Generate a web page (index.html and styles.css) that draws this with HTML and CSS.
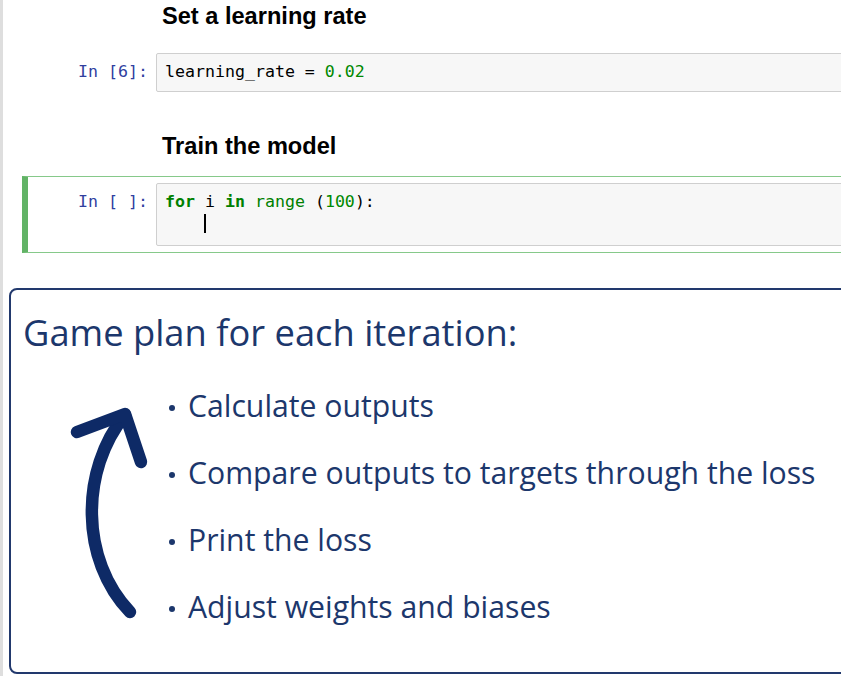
FILE: index.html
```html
<!DOCTYPE html>
<html lang="en">
<head>
<meta charset="utf-8">
<title>Notebook</title>
<link rel="stylesheet" href="styles.css">
</head>
<body>
<div class="page">
  <div class="nb">
    <div class="md md-first"><div class="prompt"></div><h2 class="md-text">Set a learning rate</h2></div>
    <div class="cell cell-first">
      <div class="prompt">In [6]:</div>
      <div class="input"><div class="code"><span class="tok">learning_rate = </span><span class="num">0.02</span></div></div>
    </div>
    <div class="md md-second"><div class="prompt"></div><h2 class="md-text">Train the model</h2></div>
    <div class="cell cell-selected">
      <div class="prompt">In [ ]:</div>
      <div class="input input-tall">
        <div class="code"><span class="kw">for</span><span class="tok"> i </span><span class="kw">in</span><span class="tok"> </span><span class="bi">range</span><span class="tok"> (</span><span class="num">100</span><span class="tok">):</span></div>
        <div class="code"><span class="tok">    </span><span class="cursor"></span></div>
      </div>
    </div>
  </div>
  <div class="slide">
    <svg class="arrow" width="100" height="230" viewBox="60 400 100 230" aria-hidden="true">
      <path d="M130 612 C 80 560 80 470 125 415" fill="none" stroke="#0e2a66" stroke-width="12.5" stroke-linecap="round"/>
      <path d="M77 432 L125 414 L141 462" fill="none" stroke="#0e2a66" stroke-width="12.5" stroke-linecap="round" stroke-linejoin="round"/>
    </svg>
    <div class="slide-title">Game plan for each iteration:</div>
    <ul class="plan">
      <li>Calculate outputs</li>
      <li>Compare outputs to targets through the loss</li>
      <li>Print the loss</li>
      <li>Adjust weights and biases</li>
    </ul>
  </div>
</div>
</body>
</html>
```
FILE: styles.css
```css
html, body {
  margin: 0;
  padding: 0;
  background: #ffffff;
  overflow: hidden;
}
.page {
  border-left: 3px solid #dedede;
  min-height: 676px;
  box-sizing: border-box;
  padding-top: 2px;
}
.nb {
  padding-left: 19px;
}
.prompt {
  width: 120px;
  flex: none;
  margin-right: 8px;
  text-align: right;
  font-family: "DejaVu Sans Mono", "Liberation Mono", monospace;
  font-size: 16.6px;
  line-height: 22px;
  padding-top: 8px;
  color: #303f9f;
  white-space: pre;
}
.md {
  display: flex;
  border-left: 6px solid transparent;
}
.md .prompt {
  padding-top: 0;
}
.md-text {
  margin: 0;
  padding-left: 6px;
  font-family: "Liberation Sans", Arial, sans-serif;
  font-weight: bold;
  font-size: 23.6px;
  line-height: 28px;
  color: #000;
}
.md-second {
  margin-top: 33px;
}
.cell {
  display: flex;
  width: 900px;
  border: 1px solid transparent;
  border-left-width: 6px;
  padding: 6px 0;
}
.cell-first {
  margin-top: 16px;
}
.cell-selected {
  margin-top: 16px;
  border-color: #86c98a;
  border-left-color: #62b366;
}
.input {
  flex: 1;
  background: #f7f7f7;
  border: 1px solid #cfcfcf;
  border-radius: 2px;
  padding: 7px 0 8px 8px;
}
.input-tall {
  min-height: 62px;
  box-sizing: border-box;
  padding-bottom: 10px;
}
.code {
  margin: 0;
  font-family: "DejaVu Sans Mono", "Liberation Mono", monospace;
  font-size: 16.6px;
  line-height: 22px;
  height: 22px;
  color: #000;
  white-space: pre;
}
.tok { color: #000; }
.num { color: #008800; }
.kw { color: #008000; font-weight: bold; }
.bi { color: #008000; }
.cursor {
  display: inline-block;
  width: 0;
  height: 19px;
  border-left: 2px solid #000;
  vertical-align: -4px;
  margin-left: -1px;
}
.slide {
  position: relative;
  margin-top: 35px;
  margin-left: 6px;
  width: 900px;
  height: 386px;
  box-sizing: border-box;
  border: 2px solid #22396d;
  border-radius: 8px;
  color: #1c376c;
  font-family: "Open Sans", "Noto Sans", sans-serif;
}
.arrow {
  position: absolute;
  left: 49px;
  top: 110px;
}
.slide-title {
  padding: 21px 0 0 12px;
  font-size: 36.3px;
  line-height: 42px;
}
.plan {
  list-style: none;
  margin: 19px 0 0 155px;
  padding: 0;
  font-size: 30.2px;
  line-height: 67px;
}
.plan li {
  display: flex;
  align-items: center;
}
.plan li::before {
  content: "";
  width: 6px;
  height: 6px;
  border-radius: 50%;
  background: #1c376c;
  margin: 4px 13px 0 3px;
  flex: none;
}
```
